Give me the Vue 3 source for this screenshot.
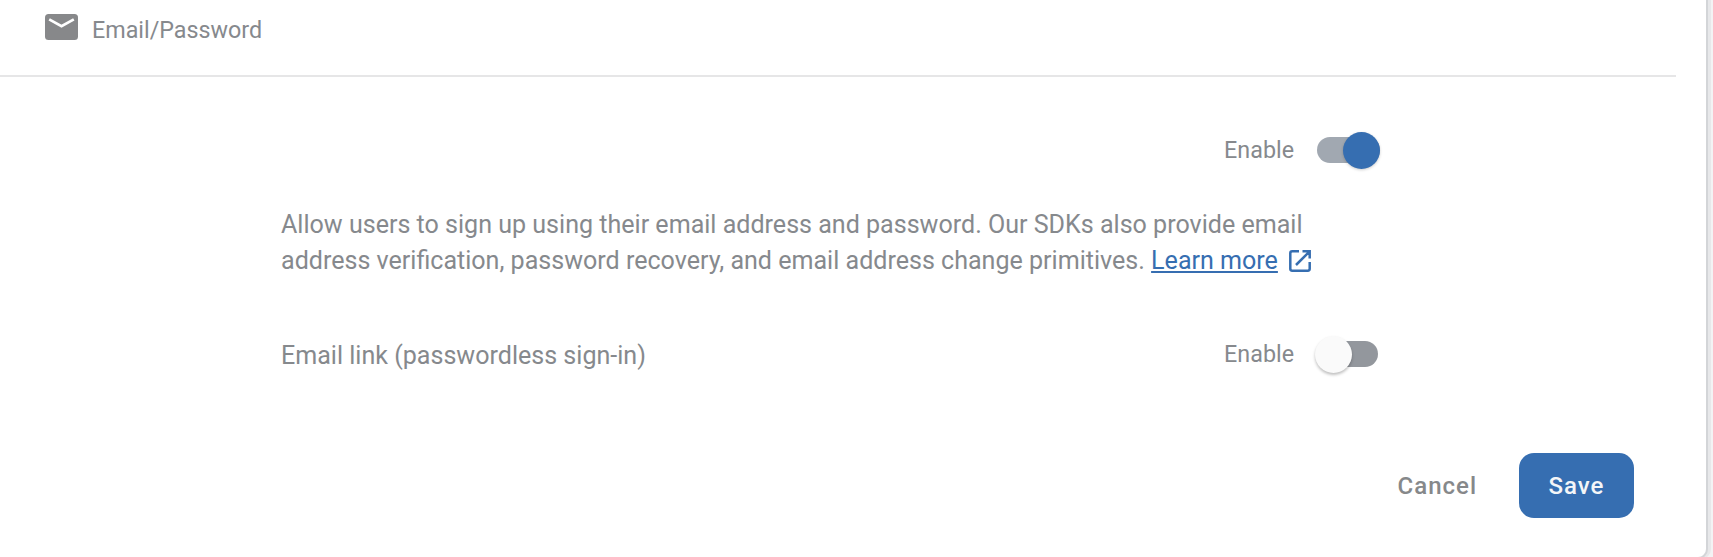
<script setup>
import { ref } from 'vue'

const passwordEnabled = ref(true)
const linkEnabled = ref(false)
</script>

<template>
  <main class="page">
    <section class="card">
      <header class="header">
        <svg class="mail" viewBox="0 0 33 26" aria-hidden="true">
          <rect width="33" height="26" rx="3.5" fill="#87888a" />
          <path d="M4.2 5.4 L16.5 12.3 L28.8 5.4" fill="none" stroke="#fff" stroke-width="2.7" />
        </svg>
        <span class="provider">Email/Password</span>
      </header>

      <div class="row enable-row">
        <span class="label">Enable</span>
        <button class="switch" :class="{ on: passwordEnabled }" role="switch" :aria-checked="passwordEnabled" @click="passwordEnabled = !passwordEnabled">
          <span class="thumb"></span>
        </button>
      </div>

      <p class="description">
        <span class="line first">Allow users to sign up using their email address and password. Our SDKs also provide email</span>
        <span class="line second">address verification, password recovery, and email address change primitives. <a class="learn">Learn more</a><svg class="external" viewBox="0 0 22 22" aria-hidden="true">
          <path d="M10 1.3 H3.2 Q1.3 1.3 1.3 3.2 V18.8 Q1.3 20.7 3.2 20.7 H18.8 Q20.7 20.7 20.7 18.8 V12 M13.5 1.3 H20.7 V8.5 M20.2 1.8 L7 15" fill="none" stroke="currentColor" stroke-width="2.5" />
        </svg></span>
      </p>

      <div class="row link-row">
        <span class="link-title">Email link (passwordless sign-in)</span>
        <span class="label">Enable</span>
        <button class="switch" :class="{ on: linkEnabled }" role="switch" :aria-checked="linkEnabled" @click="linkEnabled = !linkEnabled">
          <span class="thumb"></span>
        </button>
      </div>

      <footer class="actions">
        <button class="cancel">Cancel</button>
        <button class="save">Save</button>
      </footer>
    </section>
  </main>
</template>

<style>
body {
  background: #f3f3f4;
}
</style>

<style scoped>
.page {
  height: 557px;
  overflow: hidden;
  font: 24px/36px Roboto, sans-serif;
  color: #86898d;
}
.card {
  box-sizing: border-box;
  width: 1708px;
  height: 559px;
  background: #fff;
  border-right: 2px solid #d3d5d8;
  border-bottom: 2px solid #d3d5d8;
  border-bottom-right-radius: 10px;
  box-shadow: 3px 0 0 #e7e8ea;
}
button {
  font: inherit;
  border: 0;
  padding: 0;
  margin: 0;
  background: none;
}
.header {
  box-sizing: border-box;
  display: flex;
  align-items: flex-start;
  width: 1676px;
  height: 77px;
  padding: 12px 0 0 45px;
  border-bottom: 2px solid #e6e6e7;
}
.provider {
  font-size: 23.3px;
}
.mail {
  width: 33px;
  height: 26px;
  margin: 2px 14px 0 0;
}
.row {
  display: flex;
  align-items: center;
  width: 1380px;
  height: 40px;
}
.enable-row {
  justify-content: flex-end;
  margin-top: 53px;
}
.label {
  margin-right: 23px;
  font-size: 23.3px;
}
.switch {
  display: flex;
  align-items: center;
  width: 60px;
  height: 26px;
  margin-right: 2px;
  border-radius: 13px;
  background: #93979d;
}
.link-row .label {
  margin-right: 24px;
}
.switch.on {
  justify-content: flex-end;
  margin-right: 0;
  width: 63px;
  background: #a1a8b1;
}
.thumb {
  flex: none;
  width: 37px;
  height: 37px;
  border-radius: 50%;
  background: #fafafa;
  margin-left: -3px;
  box-shadow: 0 2px 3px rgba(0, 0, 0, 0.25);
}
.on .thumb {
  background: #366eb1;
  box-shadow: 0 1px 3px rgba(0, 0, 0, 0.2);
}
.description {
  margin: 37px 0 0 281px;
}
.line {
  display: flex;
  align-items: center;
  white-space: pre;
  font-size: 25.07px;
}
.learn {
  color: #366eb1;
  text-decoration: underline;
  text-decoration-thickness: 2px;
  text-underline-offset: 2px;
}
.external {
  width: 22px;
  height: 22px;
  margin-left: 11px;
  color: #366eb1;
}
.link-row {
  margin-top: 55px;
}
.link-title {
  margin: 4px auto 0 281px;
  font-size: 25.07px;
}
.actions {
  display: flex;
  justify-content: flex-end;
  align-items: center;
  width: 1634px;
  height: 65px;
  margin-top: 79px;
  font-weight: 500;
  letter-spacing: 1px;
}
.cancel {
  color: #86888a;
  margin-right: 42px;
  letter-spacing: 1px;
}
.save {
  width: 115px;
  height: 65px;
  border-radius: 15px;
  background: #366eb1;
  color: #f4f6f8;
  letter-spacing: 1px;
}
</style>
